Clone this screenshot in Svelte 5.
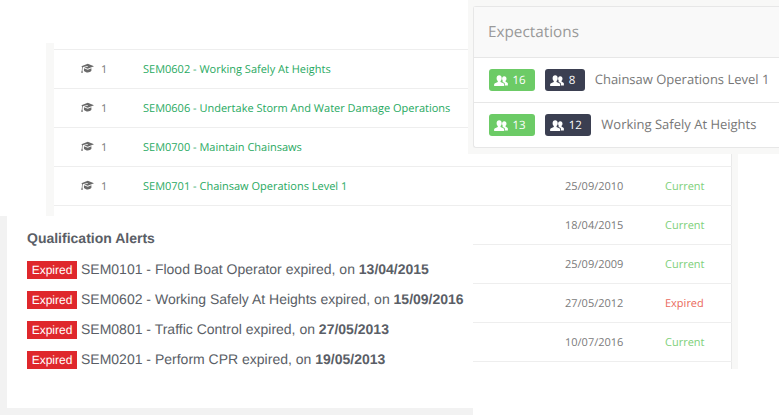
<script>
  const rows = [
    { code: 'SEM0602 - Working Safely At Heights' },
    { code: 'SEM0606 - Undertake Storm And Water Damage Operations' },
    { code: 'SEM0700 - Maintain Chainsaws' },
    { code: 'SEM0701 - Chainsaw Operations Level 1', date: '25/09/2010', status: 'Current' },
    { code: '', date: '18/04/2015', status: 'Current' },
    { code: '', date: '25/09/2009', status: 'Current' },
    { code: '', date: '27/05/2012', status: 'Expired' },
    { code: '', date: '10/07/2016', status: 'Current' }
  ];
  const alerts = [
    ['SEM0101 - Flood Boat Operator expired, on ', '13/04/2015'],
    ['SEM0602 - Working Safely At Heights expired, on ', '15/09/2016'],
    ['SEM0801 - Traffic Control expired, on ', '27/05/2013'],
    ['SEM0201 - Perform CPR expired, on ', '19/05/2013']
  ];
  const expectations = [
    [16, 8, 'Chainsaw Operations Level 1'],
    [13, 12, 'Working Safely At Heights']
  ];
</script>

{#snippet people()}
  <svg class="people" viewBox="0 0 15 12" aria-hidden="true">
    <path d="M5.500 .4c1.700 0 2.800 1.300 2.800 3.100 0 1.300-.5 2.500-1.300 3.100v1.100l3 1.300c.7.3 1 .7 1 1.300v1.700H0v-1.700c0-.6.3-1 1-1.300l3-1.300V6.600c-.8-.6-1.300-1.800-1.300-3.100C2.700 1.700 3.800.4 5.500.4z"/>
    <path d="M11.200 1.400c1.400 0 2.300 1.100 2.300 2.600 0 1-.4 1.900-1 2.400v.9l1.600.9c.6.3.9.7.9 1.200v2h-3.200v-1.300c0-.9-.5-1.500-1.300-1.900L9 7.500c.2-.3.400-.6.500-.9-.5-.7-.8-1.600-.8-2.600 0-.5.100-1 .2-1.400.5-.8 1.300-1.200 2.300-1.200z"/>
  </svg>
{/snippet}

{#snippet cap()}
  <svg class="cap" viewBox="0 0 14 11" aria-hidden="true">
    <path d="M7.300 .4 14 3.100 7.300 5.900 3.400 4.300 7.400 3.500 7.200 2.900 2.400 3.900 1.800 4.300 1.500 7.600 2.100 10H.1L.9 7.500 1.100 4 .4 3.100z"/>
    <path d="M3.200 5.100 7.300 6.900 11.200 5.300V8c-.9 1.200-2.300 1.800-4 1.800-1.500 0-2.900-.6-4-1.600z"/>
  </svg>
{/snippet}

<div class="stage">
  <section class="table">
    {#each rows as r}
      <div class="row">
        {#if r.code}
          <span class="icon">{@render cap()}</span>
          <span class="num">1</span>
          <a class="code" href="#top">{r.code}</a>
        {/if}
        <span class="date">{r.date ?? ''}</span>
        <span class="status" class:bad={r.status === 'Expired'}>{r.status ?? ''}</span>
      </div>
    {/each}
  </section>

  <aside class="expect-wrap">
    <div class="expect">
      <h2>Expectations</h2>
      {#each expectations as e}
        <div class="expect-row">
          <span class="pill green">{@render people()}{e[0]}</span>
          <span class="pill navy">{@render people()}{e[1]}</span>
          <span class="label">{e[2]}</span>
        </div>
      {/each}
    </div>
  </aside>

  <aside class="alerts">
    <h3>Qualification Alerts</h3>
    {#each alerts as a}
      <p><span class="tag">Expired</span><span class="msg">{a[0]}<b>{a[1]}</b></span></p>
    {/each}
  </aside>
</div>

<style>
  :global(body) { margin: 0; background: #fff; }
  .stage {
    position: relative;
    width: 779px;
    height: 415px;
    overflow: hidden;
    background: #fff;
    padding-top: 43px;
    box-sizing: border-box;
    font-family: "Open Sans", sans-serif;
    text-rendering: geometricPrecision;
  }
  .table {
    box-sizing: border-box;
    width: 692px;
    height: 326px;
    margin-left: 46px;
    padding-top: 6px;
    border-left: 8px solid #f8f8f7;
    border-right: 6px solid #f8f8f7;
    box-shadow: inset -1px 0 0 #e9e9e9;
    background: #fff;
    position: relative;
  }
  .table::before {
    content: "";
    position: absolute;
    left: 0;
    right: 0;
    top: 6px;
    height: 1px;
    background: #eeeeee;
  }
  .row {
    height: 39px;
    box-sizing: border-box;
    border-bottom: 1px solid #eeeeee;
    display: flex;
    align-items: center;
    font-size: 11px;
    padding-top: 1px;
    color: #777;
  }
  .row:first-child { margin-top: 1px; }
  .icon { width: 14px; margin-left: 27px; display: flex; margin-top: -2px; }
  .cap { width: 13px; height: 11px; fill: #6a6a6a; }
  .num { width: 42px; margin-left: 6px; color: #777; }
  .code { color: #27a961; text-decoration: none; width: 421px; white-space: nowrap; font-size: 11px; }
  .row .date { margin-left: auto; width: 100px; color: #7a7a7a; flex: none; }
  .row .status { width: 67px; color: #7ed07a; flex: none; }
  .row .status.bad { color: #ea6a5c; }

  .expect-wrap {
    position: absolute;
    left: 468px;
    top: 0;
    width: 311px;
    height: 154px;
    background: #f8f8f7;
    padding: 6px 0 6px 5px;
    box-sizing: border-box;
  }
  .expect {
    height: 142px;
    box-sizing: border-box;
    background: #fff;
    border: 1px solid #e7e7e7;
    border-right: 0;
    border-radius: 3px 0 0 3px;
  }
  h2 {
    margin: 0;
    height: 51px;
    box-sizing: border-box;
    padding: 14px 0 0 14px;
    font-size: 15.3px;
    line-height: 22px;
    font-weight: 400;
    color: #9a9a9a;
    background: #f9f9f9;
    border-bottom: 1px solid #e7e7e7;
  }
  .expect-row {
    height: 44px;
    box-sizing: border-box;
    display: flex;
    align-items: center;
    padding-left: 15px;
    white-space: nowrap;
  }
  .expect-row + .expect-row { border-top: 1px solid #e7e7e7; height: 45px; }
  .pill {
    height: 22px;
    box-sizing: border-box;
    display: flex;
    align-items: center;
    gap: 4.500px;
    padding: 0 9.500px 0 5px;
    border-radius: 3px;
    color: #fff;
    font-size: 11.500px;
  }
  .green { background: #6ccb66; margin-right: 10px; }
  .navy { background: #3b3f51; margin-right: 10px; }
  .people { width: 14px; height: 11px; fill: #fff; }
  .label { font-size: 13px; color: #777; margin-bottom: 2px; }

  .alerts {
    position: absolute;
    left: 0;
    top: 216px;
    width: 473px;
    height: 199px;
    box-sizing: border-box;
    background: #fff;
    border-left: 7px solid #f2f2f2;
    border-bottom: 7px solid #f2f2f2;
    padding: 12px 0 0 20px;
    font-family: "Liberation Sans", Arial, sans-serif;
    color: #5a5e66;
  }
  h3 {
    margin: 0 0 13px;
    font-size: 14px;
    line-height: 20px;
    font-weight: 700;
  }
  p {
    margin: 0 0 12px;
    height: 18px;
    display: flex;
    align-items: center;
    gap: 4px;
    font-size: 14px;
    white-space: pre;
  }
  .msg { margin-top: -2px; }
  .tag {
    flex: none;
    background: #df272c;
    color: #fff;
    width: 50px;
    height: 18px;
    line-height: 18px;
    text-align: center;
    font-size: 12px;
  }
</style>
